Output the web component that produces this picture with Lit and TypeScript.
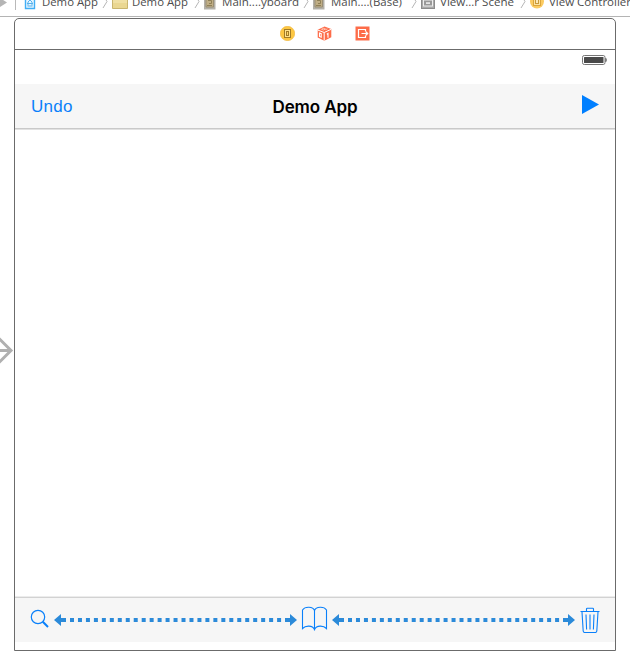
import { LitElement, html, svg, css } from "lit";
import { customElement, property } from "lit/decorators.js";

interface Crumb {
  icon: string;
  label: string;
  iconWidth: number;
  gap: number;
  textWidth: number;
  after: number;
}

const CRUMBS: Crumb[] = [
  { icon: "project", label: "Demo App", iconWidth: 12, gap: 6, textWidth: 56, after: 14 },
  { icon: "folder", label: "Demo App", iconWidth: 16, gap: 4, textWidth: 56, after: 16 },
  { icon: "board", label: "Main....yboard", iconWidth: 12, gap: 6, textWidth: 77, after: 14 },
  { icon: "board", label: "Main....(Base)", iconWidth: 12, gap: 6, textWidth: 71, after: 19 },
  { icon: "scene", label: "View...r Scene", iconWidth: 14, gap: 5, textWidth: 74, after: 16 },
  { icon: "controller", label: "View Controller", iconWidth: 14, gap: 5, textWidth: 82, after: 0 },
];

const CRUMB_ICONS: Record<string, unknown> = {
  project: svg`<path d="M1.500-3v11.500h9V-3" fill="#e9f6ff" stroke="#41aef5" stroke-width="1.400"/>
    <path d="M4 5.500V2L6 0l2 2v3.500M3 3.500h6M3.500 6h5" fill="none" stroke="#55b2ee" stroke-width="1"/>`,
  folder: svg`<path d="M.5-3h15V8.500H.5z" fill="#ead792" stroke="#c9b56f"/><path d="M1 0h14v3H1z" fill="#f0e0a4"/>`,
  board: svg`<path d="M0-4h11.500V9.500H0z" fill="#b3b0a9"/><path d="M2-2h7.500v9H2z" fill="#c0ae86" stroke="#9a8f75"/>
    <path d="M4 .5h3.500v3H5M3 5.500h5" fill="none" stroke="#8f8057"/>`,
  scene: svg`<rect x=".5" y="-4.500" width="13" height="13" fill="#aaa" stroke="#8c8c8c"/>
    <rect x="2.500" y="0" width="9" height="6" fill="#999" stroke="#eee"/><rect x="5" y="2.300" width="4" height="1.600" fill="#eee"/>`,
  controller: svg`<circle cx="7" cy="1.500" r="7" fill="#fbcb62"/>
    <rect x="3.500" y="-2" width="7" height="7.500" fill="#fbe3a4" stroke="#dca53c"/><rect x="5.500" y="-1" width="3" height="4.500" fill="#fde9b8" stroke="#c99a3a"/>`,
};

@customElement("jump-bar")
class JumpBar extends LitElement {
  static styles = css`
    :host { display: flex; height: 16px; overflow: hidden; border-bottom: 1px solid #b4b4b4; background: #fff; }
    svg { display: block; flex: none; height: 16px; }
    text { font: 11.5px "Open Sans", "Noto Sans", sans-serif; fill: #4c4c4c; }
  `;
  render() {
    return html`
      <svg width="24" viewBox="0 0 24 16">
        <path d="M0-2L7 2.500 0 7z" fill="#b5b5b5" /><path d="M15.500 0v10" stroke="#b9b9b9" />
      </svg>
      ${CRUMBS.map((c) => {
        const textX = c.iconWidth + c.gap;
        const end = textX + c.textWidth;
        const width = end + c.after;
        const tip = end + c.after - 5;
        return html`<svg width=${width} viewBox="0 0 ${width} 16">
          ${CRUMB_ICONS[c.icon]}
          <text x=${textX} y="6" textLength=${c.textWidth} lengthAdjust="spacingAndGlyphs">${c.label}</text>
          ${c.after
            ? svg`<path d="M${tip - 4} -5L${tip} 1.500L${tip - 4} 8" fill="none" stroke="#b6b6b6"/>`
            : null}
        </svg>`;
      })}
    `;
  }
}

@customElement("flexible-space")
class FlexibleSpace extends LitElement {
  static styles = css`
    :host { display: block; width: 243px; height: 12px; }
    svg { display: block; }
  `;
  render() {
    return html`<svg width="243" height="12" viewBox="0 0 243 12">
      <path d="M0 6L7 0v4h5v4H7v4zM243 6l-7-6v4h-5v4h5v4z" fill="#2b8ad9" />
      <path d="M16 6H227.200" stroke="#2b8ad9" stroke-width="4" stroke-dasharray="4 3.965" />
    </svg>`;
  }
}

@customElement("dock-icon")
class DockIcon extends LitElement {
  @property() name = "";
  static styles = css`
    :host, svg { display: block; }
  `;
  private art() {
    if (this.name === "controller")
      return svg`<circle cx="7.500" cy="7.500" r="7.200" fill="#fdc742" stroke="#eeb53c" stroke-width=".6"/>
        <rect x="4.500" y="3.500" width="6" height="8" fill="#ffe28b" stroke="#a27b26"/>
        <rect x="6.500" y="5.500" width="2" height="4" fill="#fdd568" stroke="#a27b26"/>`;
    if (this.name === "responder")
      return svg`<path d="M.7 3.700L7.500.4l6.800 2.500v8.300L7.300 14.800.7 11.500z" fill="#fd6c49"/>
        <path d="M.7 4L7.200 6.500v8M7.200 6.500l7-3.200" fill="none" stroke="#fff" stroke-width="1"/>
        <path d="M4.500 3.300l2-1 2 .7-2 1zM8.500 3.700l2-.8" fill="none" stroke="#ffd4c9" stroke-width=".8"/>
        <path d="M2.500 7l1.700.7v3.500l-1.700-.7zM9.800 8.200l1.200-.7v4.200" fill="none" stroke="#fff" stroke-width="1.100"/>`;
    return svg`<path d="M.5.500h14v14H.5z" fill="#fd6c49"/>
      <path d="M10.500 5.500V3.500h-7v8h7v-2M6.500 7.500h6M10.800 5.700l1.900 1.800-1.900 1.800" fill="none" stroke="#fff" stroke-width="1.200"/>`;
  }
  render() {
    return html`<svg width="15" height="15" viewBox="0 0 15 15">${this.art()}</svg>`;
  }
}

@customElement("app-root")
class AppRoot extends LitElement {
  static styles = css`
    :host {
      display: block; position: relative; width: 630px; height: 666px;
      overflow: hidden; background: #fff; font-family: "Liberation Sans", Arial, sans-serif;
    }
    .scene {
      box-sizing: border-box; width: 602px; height: 633px; margin: 1px 0 0 14px;
      border: 1px solid #6b6b6b; border-radius: 5px 5px 0 0;
      display: flex; flex-direction: column;
    }
    .dock {
      box-sizing: border-box; height: 31px; flex: none; border-bottom: 1px solid #6b6b6b;
      display: flex; justify-content: center; align-items: flex-start; gap: 22.500px;
      padding: 7px 0 0 19px;
    }
    .status { height: 34px; flex: none; display: flex; justify-content: flex-end; box-sizing: border-box; padding: 5px 8px 0 0; }
    .nav {
      height: 46px; box-sizing: border-box; flex: none; background: #f6f6f6;
      border-bottom: 1px solid #e2e2e2; box-shadow: inset 0 -1px #c9c9c9;
      display: grid; grid-template-columns: 1fr auto 1fr; align-items: center; padding: 0 16px;
      font-size: 17px; line-height: 20px;
    }
    .undo { color: #0a80fa; letter-spacing: 0.300px; }
    .title { font-family: Inter, "Liberation Sans", sans-serif; font-weight: 600; color: #000; font-size: 17px; letter-spacing: -0.100px; }
    .play { justify-self: end; display: block; margin-top: -3px; }
    .canvas { flex: 1; }
    .toolbar {
      height: 46px; box-sizing: border-box; flex: none; margin-bottom: 8px; background: #f6f6f6;
      border-top: 1px solid #ececec; box-shadow: inset 0 1px #d2d2d2;
      display: flex; align-items: center; padding: 0 15px 0 15px;
    }
    .toolbar svg { display: block; flex: none; }
    .search { margin: -2px 5px 0 0; }
    .book { margin: -1px 4px 0; }
    .trash { margin: 0 0 0 5px; }
    .entry { position: absolute; left: 0; top: 337px; }
  `;
  render() {
    return html`
      <jump-bar></jump-bar>
      <section class="scene">
        <div class="dock">
          <dock-icon name="controller"></dock-icon>
          <dock-icon name="responder"></dock-icon>
          <dock-icon name="exit"></dock-icon>
        </div>
        <div class="status">
          <svg width="25" height="10" viewBox="0 0 25 10">
            <rect x=".5" y=".5" width="22.500" height="9" rx="1.800" fill="#fff" stroke="#777" />
            <rect x="2" y="2" width="19.500" height="6" rx=".5" fill="#4a4a4a" />
            <path d="M23.800 3.200q1.200 1.800 0 3.600z" fill="#555" stroke="#555" stroke-width=".6" />
          </svg>
        </div>
        <header class="nav">
          <span class="undo">Undo</span>
          <span class="title">Demo App</span>
          <svg class="play" width="17" height="20" viewBox="0 0 17 20"><path d="M0 0L17 9.500 0 19z" fill="#007fff" /></svg>
        </header>
        <div class="canvas"></div>
        <footer class="toolbar">
          <svg class="search" width="19" height="20" viewBox="0 0 19 20">
            <circle cx="8" cy="8" r="6.700" fill="none" stroke="#0a80fa" stroke-width="1.200" />
            <path d="M12.800 12.800l5.200 5.200" stroke="#0a80fa" stroke-width="2" />
          </svg>
          <flexible-space></flexible-space>
          <svg class="book" width="27" height="26" viewBox="0 0 27 26">
            <path d="M13.500 4.500C12 .5 4 .2 1.500 4V22.500C4.500 19.300 11.500 19 13.500 23.500C15.500 19 22.500 19.300 25.500 22.500V4C23 .2 15 .5 13.500 4.500V24.500" fill="none" stroke="#0a80fa" stroke-width="1.100" />
          </svg>
          <flexible-space></flexible-space>
          <svg class="trash" width="20" height="26" viewBox="0 0 20 26">
            <path d="M.5 4.500h19M6.500 4V2q0-.8.800-.8h5.400q.8 0 .8.800v2M2 5l1.200 19q.1 1.500 1.500 1.500h10.600q1.400 0 1.500-1.500L18 5M6 7.500l.6 15M10 7.500v15M14 7.500l-.6 15" fill="none" stroke="#0a80fa" stroke-width="1.100" />
          </svg>
        </footer>
      </section>
      <svg class="entry" width="14" height="27" viewBox="0 0 14 27">
        <path d="M0 13.500h10M-1 1.500l12 12-12 12" fill="none" stroke="#b0b0b0" stroke-width="3" />
      </svg>
    `;
  }
}
